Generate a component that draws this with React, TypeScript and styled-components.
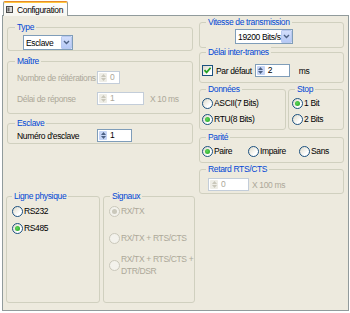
import React from "react";
import styled, { createGlobalStyle, css } from "styled-components";

const PANEL_BG = "#EDEADE";
const DISABLED = "#ACA899";

const GlobalStyle = createGlobalStyle`
  html, body {
    margin: 0;
    padding: 0;
    background: #ffffff;
  }
  body {
    font-family: "Liberation Sans", Arial, sans-serif;
    font-size: 8.5px;
    letter-spacing: -0.35px;
    color: #000;
  }
  * {
    box-sizing: border-box;
  }
`;

const Page = styled.div`
  width: 350px;
  height: 313px;
  overflow: hidden;
  background: #ffffff;
  padding-top: 1px;
`;

const TabStrip = styled.div`
  display: flex;
  height: 14px;
  padding-left: 3px;
  position: relative;
  z-index: 1;
`;

const Tab = styled.div`
  width: 65px;
  height: 15px;
  display: flex;
  align-items: center;
  gap: 4px;
  padding: 1px 0 0 2px;
  border: 1px solid #919b9c;
  border-top: 1px solid #e68b2c;
  border-bottom: none;
  border-radius: 2px 2px 0 0;
  box-shadow: inset 0 1px 0 #ffc73c;
  background: linear-gradient(#ffffff, #f7f6f0);
`;

const Panel = styled.div`
  margin-left: 2px;
  width: 347px;
  height: 296px;
  border: 1px solid #919b9c;
  background: ${PANEL_BG};
  display: flex;
  gap: 4px;
  padding: 0 4px 0 3px;
`;

const Column = styled.div<{ $width: number; $top: number }>`
  width: ${({ $width }) => $width}px;
  padding-top: ${({ $top }) => $top}px;
  display: flex;
  flex-direction: column;
  flex-shrink: 0;
`;

const Box = styled.div<{ $h: number; $mt?: number; $w?: number; $inset?: boolean }>`
  height: ${({ $h }) => $h}px;
  margin-top: ${({ $mt }) => $mt ?? 0}px;
  ${({ $w }) =>
    $w &&
    css`
      width: ${$w}px;
    `}
  ${({ $inset }) =>
    $inset &&
    css`
      margin-left: 1px;
      margin-right: 2px;
    `}
  border: 1px solid #d0d0bf;
  border-radius: 3px;
  flex-shrink: 0;
`;

const Caption = styled.div<{ $ml: number }>`
  width: fit-content;
  margin: -6px 0 0 ${({ $ml }) => $ml}px;
  padding: 0 2px;
  line-height: 10px;
  background: ${PANEL_BG};
  color: #0046d5;
  white-space: nowrap;
`;

const Body = styled.div<{ $pt: number; $pl: number }>`
  padding: ${({ $pt }) => $pt}px 0 0 ${({ $pl }) => $pl}px;
`;

const Row = styled.div<{ $mt?: number; $h?: number }>`
  display: flex;
  align-items: center;
  height: ${({ $h }) => $h ?? 13}px;
  margin-top: ${({ $mt }) => $mt ?? 0}px;
  white-space: nowrap;
`;

const BoxRow = styled.div<{ $mt?: number }>`
  display: flex;
  gap: 2px;
  margin-top: ${({ $mt }) => $mt ?? 0}px;
`;

const BottomRow = styled.div`
  display: flex;
  gap: 3px;
  margin-top: 52px;
`;

const Label = styled.span<{ $disabled?: boolean; $w?: number; $ml?: number }>`
  color: ${({ $disabled }) => ($disabled ? DISABLED : "#000")};
  margin-left: ${({ $ml }) => $ml ?? 0}px;
  ${({ $w }) =>
    $w &&
    css`
      width: ${$w}px;
    `}
  line-height: 12px;
`;

const Spinner = styled.div<{ $w: number; $disabled?: boolean; $ml?: number }>`
  width: ${({ $w }) => $w}px;
  height: 13px;
  margin-left: ${({ $ml }) => $ml ?? 0}px;
  border: 1px solid ${({ $disabled }) => ($disabled ? "#c3cdd9" : "#7f9db9")};
  background: #ffffff;
  display: flex;
  align-items: stretch;
  flex-shrink: 0;
`;

const SpinButtons = styled.div<{ $disabled?: boolean }>`
  width: 8px;
  margin: 1px;
  border-radius: 1px;
  background: ${({ $disabled }) => ($disabled ? "#eeede6" : "#c6d5f6")};
  display: flex;
  flex-direction: column;
  justify-content: center;
  align-items: center;
  gap: 1px;
`;

const SpinValue = styled.span<{ $disabled?: boolean }>`
  padding-left: 2px;
  line-height: 11px;
  color: ${({ $disabled }) => ($disabled ? DISABLED : "#000")};
`;

const Select = styled.div<{ $w: number }>`
  width: ${({ $w }) => $w}px;
  height: 15px;
  border: 1px solid #7f9db9;
  background: #ffffff;
  display: flex;
  align-items: center;
  justify-content: space-between;
  padding-left: 2px;
`;

const SelectButton = styled.span`
  width: 11px;
  height: 13px;
  border: 1px solid #b9c9ef;
  border-radius: 1px;
  background: linear-gradient(#d2defb, #b6c9f6);
  display: flex;
  align-items: center;
  justify-content: center;
`;

const RadioCircle = styled.span<{ $disabled?: boolean }>`
  width: 11px;
  height: 11px;
  border-radius: 50%;
  flex-shrink: 0;
  display: flex;
  align-items: center;
  justify-content: center;
  border: 1px solid ${({ $disabled }) => ($disabled ? "#cac8bb" : "#1c5180")};
  background: ${({ $disabled }) =>
    $disabled ? "#f3f2ec" : "linear-gradient(135deg, #dcd9c9, #ffffff 70%)"};
`;

const RadioDot = styled.span<{ $disabled?: boolean }>`
  width: 5px;
  height: 5px;
  border-radius: 50%;
  background: ${({ $disabled }) =>
    $disabled ? "#cac8bb" : "radial-gradient(circle at 40% 40%, #5fd65b, #21a121)"};
`;

const RadioItem = styled.div<{ $w?: number }>`
  display: flex;
  align-items: center;
  gap: 1px;
  ${({ $w }) =>
    $w &&
    css`
      width: ${$w}px;
    `}
`;

const CheckBox = styled.span`
  width: 11px;
  height: 11px;
  border: 1px solid #1c5180;
  background: linear-gradient(135deg, #dcd9c9, #ffffff 75%);
  display: flex;
  align-items: center;
  justify-content: center;
  flex-shrink: 0;
`;

const TabIcon = () => (
  <svg width="7" height="7" viewBox="0 0 7 7">
    <rect x="0.5" y="0.5" width="6" height="6" fill="#d8d8d8" stroke="#4a4a4a" />
    <rect x="1.5" y="1.5" width="2" height="4" fill="#6a6a6a" />
  </svg>
);

const Chevron = () => (
  <svg width="7" height="5" viewBox="0 0 7 5">
    <path d="M1 1 L3.5 3.5 L6 1" stroke="#4d6185" strokeWidth="1.4" fill="none" />
  </svg>
);

const SpinArrows = ({ disabled }: { disabled?: boolean }) => {
  const c = disabled ? "#c9c7ba" : "#4d6185";
  return (
    <>
      <svg width="5" height="3" viewBox="0 0 5 3">
        <path d="M0 3 L2.5 0 L5 3Z" fill={c} />
      </svg>
      <svg width="5" height="3" viewBox="0 0 5 3">
        <path d="M0 0 L2.5 3 L5 0Z" fill={c} />
      </svg>
    </>
  );
};

const Check = () => (
  <svg width="9" height="9" viewBox="0 0 9 9">
    <path d="M1.5 4.2 L3.6 6.4 L7.6 1.8" stroke="#21a121" strokeWidth="1.7" fill="none" />
  </svg>
);

interface SpinProps {
  w: number;
  value: string;
  disabled?: boolean;
  ml?: number;
}
const SpinBox = ({ w, value, disabled, ml }: SpinProps) => (
  <Spinner $w={w} $disabled={disabled} $ml={ml}>
    <SpinButtons $disabled={disabled}>
      <SpinArrows disabled={disabled} />
    </SpinButtons>
    <SpinValue $disabled={disabled}>{value}</SpinValue>
  </Spinner>
);

interface RadioProps {
  label: React.ReactNode;
  checked?: boolean;
  disabled?: boolean;
  w?: number;
}
const Radio = ({ label, checked, disabled, w }: RadioProps) => (
  <RadioItem $w={w}>
    <RadioCircle $disabled={disabled}>{checked && <RadioDot $disabled={disabled} />}</RadioCircle>
    <Label $disabled={disabled}>{label}</Label>
  </RadioItem>
);

const DropDown = ({ w, value }: { w: number; value: string }) => (
  <Select $w={w}>
    <span>{value}</span>
    <SelectButton>
      <Chevron />
    </SelectButton>
  </Select>
);

export default function App() {
  return (
    <>
      <GlobalStyle />
      <Page>
        <TabStrip>
          <Tab>
            <TabIcon />
            <span>Configuration</span>
          </Tab>
        </TabStrip>
        <Panel>
          <Column $width={189} $top={11}>
            <Box $h={24} $inset>
              <Caption $ml={7}>Type</Caption>
              <Body $pt={3} $pl={15}>
                <DropDown w={50} value="Esclave" />
              </Body>
            </Box>

            <Box $h={53} $mt={10} $inset>
              <Caption $ml={7}>Maître</Caption>
              <Body $pt={5} $pl={9}>
                <Row>
                  <Label $disabled $w={80}>
                    Nombre de réitérations
                  </Label>
                  <SpinBox w={23} value="0" disabled />
                </Row>
                <Row $mt={8}>
                  <Label $disabled $w={80}>
                    Délai de réponse
                  </Label>
                  <SpinBox w={47} value="1" disabled />
                  <Label $disabled $ml={6}>
                    X 10 ms
                  </Label>
                </Row>
              </Body>
            </Box>

            <Box $h={21} $mt={9} $inset>
              <Caption $ml={7}>Esclave</Caption>
              <Body $pt={1} $pl={9}>
                <Row>
                  <Label $w={80}>Numéro d'esclave</Label>
                  <SpinBox w={35} value="1" />
                </Row>
              </Body>
            </Box>

            <BottomRow>
              <Box $h={107} $w={94}>
                <Caption $ml={5}>Ligne physique</Caption>
                <Body $pt={4} $pl={5}>
                  <Row $h={12}>
                    <Radio label="RS232" />
                  </Row>
                  <Row $h={12} $mt={5}>
                    <Radio label="RS485" checked />
                  </Row>
                </Body>
              </Box>
              <Box $h={107} $w={92}>
                <Caption $ml={6}>Signaux</Caption>
                <Body $pt={4} $pl={5}>
                  <Row $h={12}>
                    <Radio label="RX/TX" checked disabled />
                  </Row>
                  <Row $h={12} $mt={15}>
                    <Radio label="RX/TX + RTS/CTS" disabled />
                  </Row>
                  <Row $h={24} $mt={9}>
                    <Radio
                      label={
                        <>
                          RX/TX + RTS/CTS +
                          <br />
                          DTR/DSR
                        </>
                      }
                      disabled
                    />
                  </Row>
                </Body>
              </Box>
            </BottomRow>
          </Column>

          <Column $width={145} $top={6}>
            <Box $h={26}>
              <Caption $ml={6}>Vitesse de transmission</Caption>
              <Body $pt={2} $pl={35}>
                <DropDown w={58} value="19200 Bits/s" />
              </Body>
            </Box>

            <Box $h={31} $mt={4}>
              <Caption $ml={6}>Délai inter-trames</Caption>
              <Body $pt={7} $pl={2}>
                <Row>
                  <CheckBox>
                    <Check />
                  </CheckBox>
                  <Label $ml={3}>Par défaut</Label>
                  <SpinBox w={35} value="2" ml={3} />
                  <Label $ml={9}>ms</Label>
                </Row>
              </Body>
            </Box>

            <BoxRow $mt={6}>
              <Box $h={41} $w={87}>
                <Caption $ml={6}>Données</Caption>
                <Body $pt={3} $pl={2}>
                  <Row $h={12}>
                    <Radio label="ASCII(7 Bits)" />
                  </Row>
                  <Row $h={12} $mt={4}>
                    <Radio label="RTU(8 Bits)" checked />
                  </Row>
                </Body>
              </Box>
              <Box $h={41} $w={56}>
                <Caption $ml={6}>Stop</Caption>
                <Body $pt={3} $pl={3}>
                  <Row $h={12}>
                    <Radio label="1 Bit" checked />
                  </Row>
                  <Row $h={12} $mt={4}>
                    <Radio label="2 Bits" />
                  </Row>
                </Body>
              </Box>
            </BoxRow>

            <Box $h={26} $mt={7}>
              <Caption $ml={6}>Parité</Caption>
              <Body $pt={3} $pl={2}>
                <Row $h={12}>
                  <Radio label="Paire" checked w={46} />
                  <Radio label="Impaire" w={51} />
                  <Radio label="Sans" />
                </Row>
              </Body>
            </Box>

            <Box $h={25} $mt={6}>
              <Caption $ml={6}>Retard RTS/CTS</Caption>
              <Body $pt={4} $pl={8}>
                <Row>
                  <SpinBox w={41} value="0" disabled />
                  <Label $disabled $ml={3}>
                    X 100 ms
                  </Label>
                </Row>
              </Body>
            </Box>
          </Column>
        </Panel>
      </Page>
    </>
  );
}
